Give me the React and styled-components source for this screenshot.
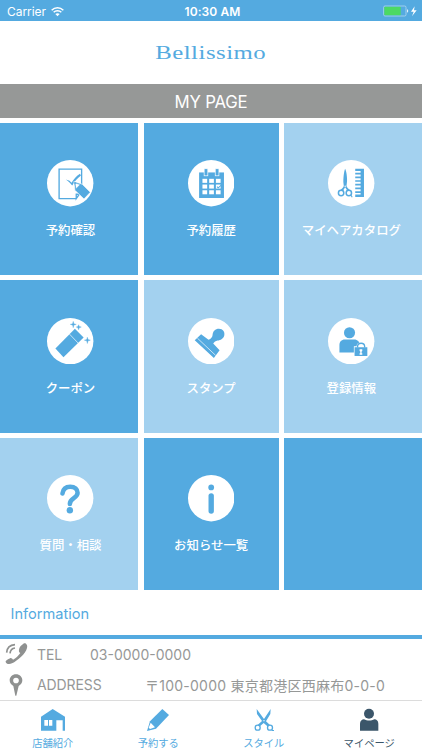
import React from 'react'
import styled, { createGlobalStyle, ThemeProvider } from 'styled-components'

const theme = {
  blue: '#54aae0',
  light: '#a3d1ef',
  grey: '#969897',
  dark: '#3b566a',
}

const GlobalStyle = createGlobalStyle`
  * {
    box-sizing: border-box;
  }
  body {
    margin: 0;
    background: #fff;
    font-family: Inter, 'Noto Sans CJK JP', sans-serif;
  }
`

const Screen = styled.div`
  width: 422px;
  height: 750px;
  display: flex;
  flex-direction: column;
  overflow: hidden;
`

const StatusBar = styled.div`
  height: 21px;
  flex: none;
  padding: 1px 5px 0 7px;
  display: grid;
  grid-template-columns: 1fr auto 1fr;
  align-items: center;
  color: #fff;
  background: ${({ theme }) => theme.blue};
`

const Carrier = styled.div`
  display: flex;
  align-items: center;
  gap: 5px;
  font-size: 12px;
  letter-spacing: -0.05px;
`

const Clock = styled.div`
  padding-left: 1px;
  font-size: 12px;
  font-weight: 600;
  letter-spacing: 0.1px;
`

const Battery = styled.div`
  display: flex;
  justify-content: flex-end;
`

const LogoBar = styled.header`
  height: 63px;
  flex: none;
  display: flex;
  align-items: center;
  justify-content: center;
`

const Logo = styled.div`
  font-family: 'Liberation Serif', serif;
  font-size: 19.5px;
  line-height: 22px;
  letter-spacing: 0.4px;
  color: ${({ theme }) => theme.blue};
  transform: scaleX(1.27);
`

const PageTitle = styled.h1`
  margin: 0 0 5px;
  height: 34px;
  flex: none;
  padding-top: 2px;
  display: flex;
  align-items: center;
  justify-content: center;
  font-size: 16.8px;
  font-weight: 400;
  letter-spacing: -0.2px;
  color: #fff;
  background: ${({ theme }) => theme.grey};
`

const Menu = styled.div`
  flex: none;
  display: grid;
  grid-template-columns: 138.4px 135.2px 138px;
  grid-auto-rows: 152.4px;
  gap: 5.1px 5.2px;
`

const Tile = styled.div`
  display: flex;
  flex-direction: column;
  align-items: center;
  padding-top: 37.3px;
  color: #fff;
  background: ${({ theme, $light }) => ($light ? theme.light : theme.blue)};

  &:nth-child(3n + 1) {
    padding-left: 2.6px;
  }
  &:nth-child(3n) {
    padding-right: 3.2px;
  }
`

const TileIcon = styled.svg`
  width: 46.4px;
  height: 46.4px;
  color: ${({ theme }) => theme.blue};
`

const TileLabel = styled.div`
  margin-top: 14.5px;
  font-family: 'Noto Sans CJK JP', sans-serif;
  font-size: 12.4px;
  line-height: 18px;
  font-weight: 500;
  white-space: nowrap;
`

const InfoTitle = styled.h2`
  margin: 0;
  height: 48.5px;
  flex: none;
  padding-left: 10.5px;
  border-bottom: 4px solid ${({ theme }) => theme.blue};
  font-size: 14.6px;
  line-height: 48px;
  font-weight: 400;
  color: ${({ theme }) => theme.blue};
`

const InfoRow = styled.div`
  height: 30.5px;
  flex: none;
  display: flex;
  align-items: center;
  padding-left: 4px;
  font-size: 14px;
  color: ${({ theme }) => theme.grey};

  svg {
    width: 24px;
    height: 24px;
    margin-right: 9px;
  }
`

const Key = styled.span`
  width: ${({ $width }) => $width}px;
  letter-spacing: -0.1px;
`

const Value = styled.span`
  letter-spacing: ${({ $spacing }) => $spacing}px;
  white-space: nowrap;
`

const TabBar = styled.nav`
  margin-top: auto;
  height: 51px;
  flex: none;
  display: grid;
  grid-template-columns: repeat(4, 1fr);
  border-top: 1px solid #dcdcdc;
`

const Tab = styled.div`
  display: flex;
  flex-direction: column;
  align-items: center;
  padding-top: 7px;
  font-family: 'Noto Sans CJK JP', sans-serif;
  font-size: 10.3px;
  line-height: 14px;
  color: ${({ theme, $active }) => ($active ? theme.dark : theme.blue)};

  svg {
    width: 24px;
    height: 24px;
    margin-bottom: 4px;
  }
`

const Round = ({ children }) => (
  <TileIcon viewBox="0 0 138 138">
    <circle cx="69" cy="69" r="69" fill="#fff" />
    {children}
  </TileIcon>
)

const CheckIcon = () => (
  <Round>
    <path d="M87 115H36V27h67v65L87 115v-13h15" fill="none" stroke="currentColor" strokeWidth="4" />
    <path d="M56 58l11 4 6 6C79 58 88 47 98 41l3 5C90 54 82 64 75 76c-5-7-10-12-19-18z" fill="currentColor" />
    <path d="M80 64l25 8 24 24-19 20-27-26z" fill="currentColor" stroke="#fff" strokeWidth="2" />
    <path d="M83 68l16 5-13 13z" fill="#fff" stroke="currentColor" strokeWidth="2" />
    <path d="M81 66l7 2-5 5z" fill="currentColor" />
  </Round>
)

const CalendarIcon = () => (
  <Round>
    <path d="M33 37h74v76H33z" fill="currentColor" />
    {[48, 81].map((x) => (
      <rect key={x} x={x} y="26" width="11" height="21" fill="currentColor" stroke="#fff" strokeWidth="2" />
    ))}
    {[56, 73, 90].map((y) =>
      [43, 63, 83].map((x) => (
        <rect key={`${x}-${y}`} x={x} y={y} width="14" height="12" fill="#fff" />
      ))
    )}
    <path d="M86 79l4 4 9-8" fill="none" stroke="currentColor" strokeWidth="3" />
  </Round>
)

const CombIcon = () => (
  <Round>
    <path d="M51 26c5 10 7 35 5 43l-1 8c2 5 6 9 11 13l-6 5-9-14-9 14-6-5c5-4 9-8 11-13l-1-8c-1-10 1-34 5-43z" fill="currentColor" />
    <circle cx="39" cy="98" r="8" fill="#fff" stroke="currentColor" strokeWidth="4.5" />
    <circle cx="62" cy="98" r="8" fill="#fff" stroke="currentColor" strokeWidth="4.5" />
    <path d="M68 104l4 7" stroke="currentColor" strokeWidth="3" />
    <circle cx="51" cy="78" r="2" fill="#fff" />
    <path d="M81 26h26v84H81v-7h16v-5H81v-5h16v-6H81v-5h16v-6H81v-5h16v-6H81v-5h16v-6H81v-5h16v-6H81v-5h16v-5H81z" fill="currentColor" />
  </Round>
)

const EraserIcon = () => (
  <Round>
    <path d="M83 32l26 26-60 59-24-26z" fill="currentColor" />
    <path d="M67 48l26 27" stroke="#fff" strokeWidth="2" />
    <path
      d="M78 10l2 7 7 2-7 2-2 8-2-8-7-2 7-2zM94 20l2 5 6 2-6 2-2 6-2-6-5-2 5-2zM120 57l2 7 7 2-7 2-2 8-2-8-7-2 7-2z"
      fill="currentColor"
      stroke="currentColor"
      strokeWidth="1"
    />
  </Round>
)

const StampIcon = () => (
  <Round>
    <path d="M39 48l22 17c8-4 11-8 12-14 1-12 8-19 19-19 12 0 18 9 16 19-2 10-11 15-20 16-6 1-10 4-13 9l19 20-17 23-57-53z" fill="currentColor" />
    <path d="M28 60l54 51" stroke="#fff" strokeWidth="2" />
  </Round>
)

const MemberIcon = () => (
  <Round>
    <circle cx="64" cy="44" r="16.5" fill="currentColor" />
    <path d="M34 103V80c0-9 6-16 16-16h28c10 0 16 7 16 16v23z" fill="currentColor" />
    <path d="M77 84h8c0-16 27-16 27 0h6v30H77z" fill="#fff" />
    <path d="M88 88v-3c0-13 21-13 21 0v3" fill="none" stroke="currentColor" strokeWidth="4" />
    <rect x="79" y="87" width="38" height="26" fill="currentColor" />
    <path d="M94 93h8v5l-2 2v5h2v4h-8v-4h2v-5l-2-2z" fill="#fff" />
  </Round>
)

const QuestionIcon = () => (
  <Round>
    <path d="M46 55C48 40 56 35 69 35c14 0 22 7 22 18 0 17-23 15-23 33" fill="none" stroke="currentColor" strokeWidth="13.5" strokeLinecap="round" />
    <circle cx="68" cy="105" r="9.5" fill="currentColor" />
  </Round>
)

const InfoIcon = () => (
  <Round>
    <circle cx="69" cy="37" r="8.5" fill="currentColor" />
    <rect x="61" y="54" width="16" height="61" rx="8" fill="currentColor" />
  </Round>
)

const WifiIcon = () => (
  <svg width="13" height="11" viewBox="0 0 39 31" fill="none" stroke="#fff" strokeWidth="4.5">
    <path d="M2 12C12 2 27 2 37 12M8 18c6-6 17-6 23 0" />
    <path d="M13 23c4-3 9-3 13 0l-6.500 7z" fill="#fff" stroke="none" />
  </svg>
)

const BatteryIcon = () => (
  <svg width="34" height="12" viewBox="0 0 102 36">
    <rect x="2" y="3" width="67" height="30" rx="4" fill="none" stroke="#c6e2f5" strokeWidth="2" />
    <rect x="4" y="5" width="49" height="26" rx="2" fill="#4cd964" />
    <path d="M72 13c5 1 5 9 0 10z" fill="#e1f0fa" />
    <path d="M95 4L84 20h8l-5 14 14-18h-8z" fill="#fff" />
  </svg>
)

const PhoneIcon = () => (
  <svg viewBox="0 0 72 72" fill="#8f9190">
    <path d="M50 12l10-8c5-2 12 5 9 14-4 17-28 38-45 46-8 4-18 2-19-4-1-3 7-8 13-11 3-2 7 1 9 4 8-4 16-11 22-20-4-2-5-5-4-9 0-3 2-8 5-12z" />
    <path d="M8 32c1-15 11-23 25-24M18 34c1-9 7-15 15-16" fill="none" stroke="#8f9190" strokeWidth="5" />
  </svg>
)

const PinIcon = () => (
  <svg viewBox="0 0 72 72" fill="#8f9190">
    <path fillRule="evenodd" d="M36 4c11 0 19 8 19 18 0 7-4 13-11 17l-7 29h-3l-6-29c-7-4-11-10-11-17C17 12 25 4 36 4zm0 10a8.500 8.500 0 100 17 8.500 8.500 0 000-17z" />
  </svg>
)

const HouseIcon = () => (
  <svg viewBox="0 0 72 72">
    <path d="M0 26L35 3l37 23v42H65V37H46v31H0z" fill="currentColor" />
    <path d="M10 36h11v17H10zM24 36h10v17H24z" fill="#fff" />
  </svg>
)

const PencilIcon = () => (
  <svg viewBox="0 0 72 72">
    <path d="M49 3l20 18-39 41L3 69l9-29z" fill="currentColor" />
    <path d="M14 44l13 14-15 5-4-4z" fill="#fff" />
  </svg>
)

const ScissorsIcon = () => (
  <svg viewBox="0 0 72 72" fill="currentColor">
    <path d="M14 3l22 30L56 3l-1 15-13 22 12 11-6 5-13-11-13 11-6-4 14-13L15 18z" />
    <circle cx="17" cy="59" r="7.500" fill="#fff" stroke="currentColor" strokeWidth="4" />
    <circle cx="54" cy="59" r="7.500" fill="#fff" stroke="currentColor" strokeWidth="4" />
    <path d="M59 66h7v3h-6z" />
    <circle cx="36" cy="38" r="2" fill="#fff" />
  </svg>
)

const PersonIcon = () => (
  <svg viewBox="0 0 72 72" fill="currentColor">
    <circle cx="36" cy="17" r="15" />
    <path d="M9 68V47c0-8 6-13 12-13 9 5 22 5 31 0 7 0 12 5 12 13v21z" />
  </svg>
)

const tiles = [
  { label: '予約確認', icon: <CheckIcon /> },
  { label: '予約履歴', icon: <CalendarIcon /> },
  { label: 'マイヘアカタログ', icon: <CombIcon />, light: true },
  { label: 'クーポン', icon: <EraserIcon /> },
  { label: 'スタンプ', icon: <StampIcon />, light: true },
  { label: '登録情報', icon: <MemberIcon />, light: true },
  { label: '質問・相談', icon: <QuestionIcon />, light: true },
  { label: 'お知らせ一覧', icon: <InfoIcon /> },
]

const App = () => (
  <ThemeProvider theme={theme}>
    <GlobalStyle />
    <Screen>
      <StatusBar>
        <Carrier>
          Carrier
          <WifiIcon />
        </Carrier>
        <Clock>10:30 AM</Clock>
        <Battery>
          <BatteryIcon />
        </Battery>
      </StatusBar>
      <LogoBar>
        <Logo>Bellissimo</Logo>
      </LogoBar>
      <PageTitle>MY PAGE</PageTitle>
      <Menu>
        {tiles.map(({ label, icon, light }) => (
          <Tile key={label} $light={light}>
            {icon}
            <TileLabel>{label}</TileLabel>
          </Tile>
        ))}
        <Tile />
      </Menu>
      <InfoTitle>Information</InfoTitle>
      <InfoRow>
        <PhoneIcon />
        <Key $width={53}>TEL</Key>
        <Value $spacing={0}>03-0000-0000</Value>
      </InfoRow>
      <InfoRow>
        <PinIcon />
        <Key $width={108}>ADDRESS</Key>
        <Value $spacing={0.24}>〒100-0000 東京都港区西麻布0-0-0</Value>
      </InfoRow>
      <TabBar>
        <Tab>
          <HouseIcon />
          店舗紹介
        </Tab>
        <Tab>
          <PencilIcon />
          予約する
        </Tab>
        <Tab>
          <ScissorsIcon />
          スタイル
        </Tab>
        <Tab $active>
          <PersonIcon />
          マイページ
        </Tab>
      </TabBar>
    </Screen>
  </ThemeProvider>
)

export default App
